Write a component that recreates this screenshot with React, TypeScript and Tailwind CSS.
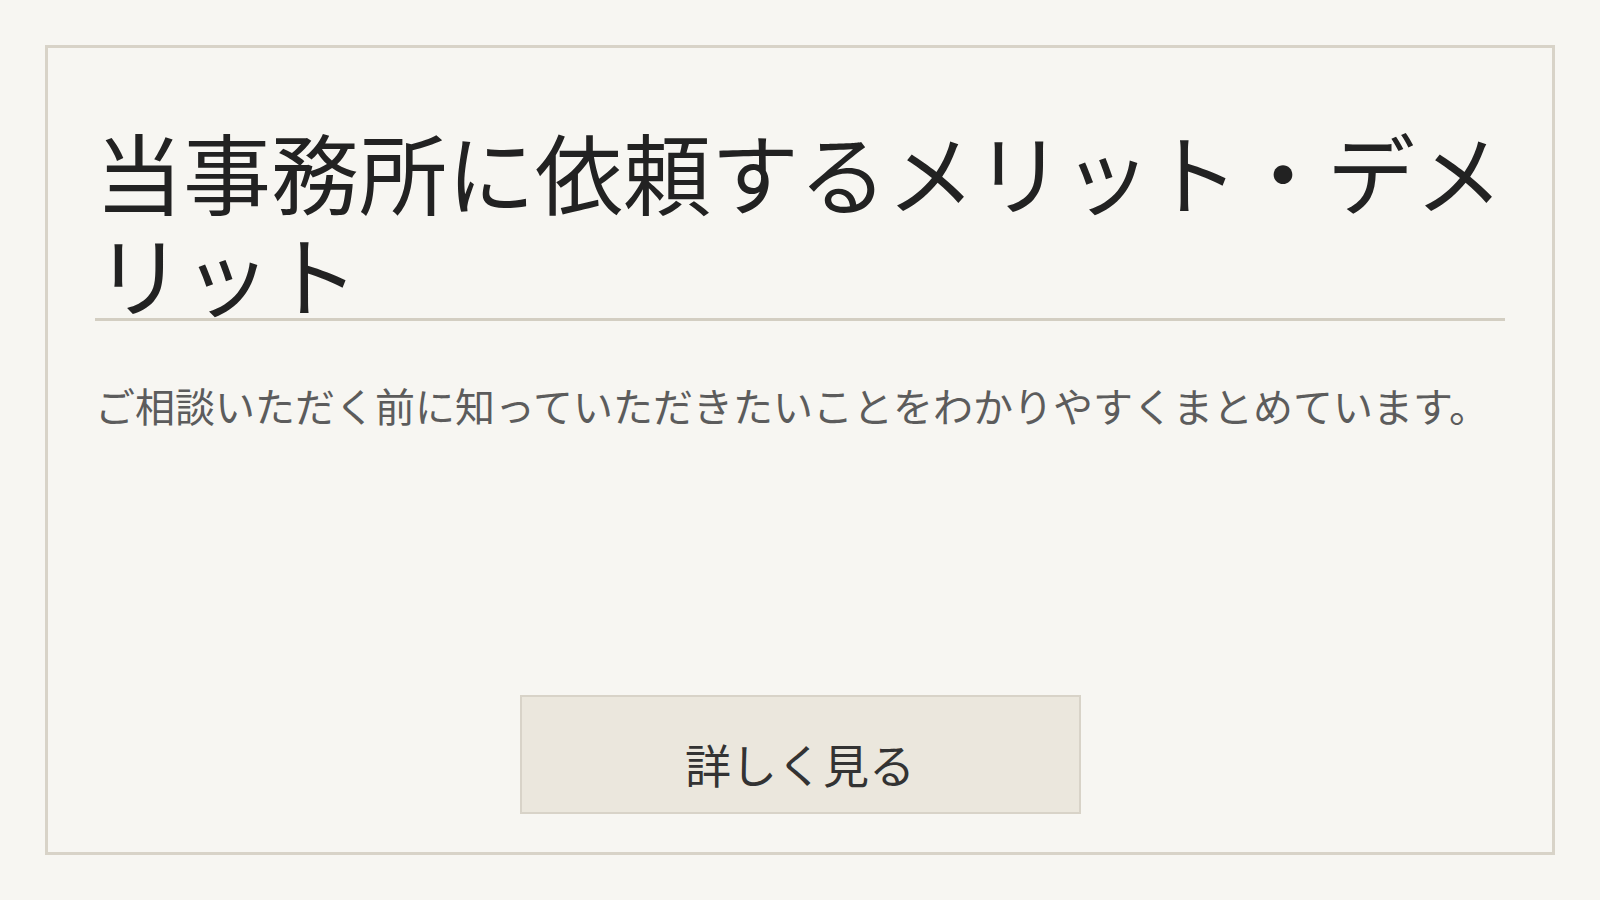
import React from "react";

const JP = "font-['Noto_Sans_CJK_JP','Noto_Sans',sans-serif]";

export default function App() {
  return (
    <div className={`min-h-screen w-full bg-[#f7f6f2] p-[45px] ${JP}`}>
      <section className="flex h-[810px] flex-col border-[3px] border-[#d8d3c8] px-[47px] pt-[71px] pb-[38px]">
        <h1 className="h-[202px] border-b-[3px] border-[#d3cec2] text-[88px] leading-[102px] font-normal text-[#222222]">
          当事務所に依頼するメリット・デメリット
        </h1>
        <p className="mt-[56px] text-[40px] leading-[56px] text-[#5c5c5c]">
          ご相談いただく前に知っていただきたいことをわかりやすくまとめています。
        </p>
        <div className="mt-auto flex justify-center">
          <button className="h-[119px] w-[561px] border-2 border-[#d8d3c8] bg-[#ebe7dd] pt-[18px] text-[46px] text-[#333333]">
            詳しく見る
          </button>
        </div>
      </section>
    </div>
  );
}
